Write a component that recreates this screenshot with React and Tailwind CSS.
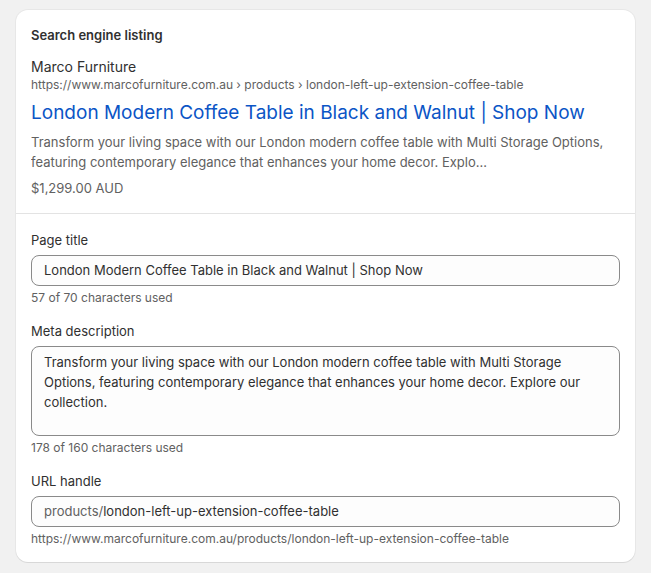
import React from 'react';

const font = { fontFamily: 'Inter, "Noto Sans", sans-serif' };

function Field({ label, help, children }) {
  return (
    <div className="flex flex-col">
      <label className="text-[13px] leading-5 text-[#303030]">{label}</label>
      <div className="mt-[5px]">{children}</div>
      <p className="mt-[2px] text-[12px] leading-5 text-[#616161]">{help}</p>
    </div>
  );
}

export default function App() {
  const title = 'London Modern Coffee Table in Black and Walnut | Shop Now';
  const desc =
    'Transform your living space with our London modern coffee table with Multi Storage Options, featuring contemporary elegance that enhances your home decor. Explore our collection.';

  return (
    <div className="min-h-[573px] bg-[#f1f1f1] px-4 pt-[10px] pb-[11px]" style={font}>
      <div className="rounded-xl bg-white shadow-[0_1px_0_0_rgba(26,26,26,0.07),0_0_0_1px_rgba(0,0,0,0.04)]">
        <div className="px-[15px] pt-[15px] pb-[15px]">
          <h2 className="text-[13px] leading-5 font-semibold text-[#303030]">Search engine listing</h2>
          <div className="mt-[12px]">
            <p className="text-[14px] leading-5 text-[#303030]">Marco Furniture</p>
            <p className="text-[12px] leading-4 text-[#616161]">
              https://www.marcofurniture.com.au › products › london-left-up-extension-coffee-table
            </p>
            <p className="mt-[6px] text-[19px] leading-7 text-[#0b55c6]">{title}</p>
            <p className="mt-[5px] text-[13px] leading-5 text-[#616161] line-clamp-2 pr-4">
              Transform your living space with our London modern coffee table with Multi Storage Options,
              featuring contemporary elegance that enhances your home decor. Explo...
            </p>
            <p className="mt-[6px] text-[13px] leading-5 text-[#616161]">$1,299.00 AUD</p>
          </div>
        </div>
        <div className="border-t border-[#e3e3e3] px-[15px] pt-[16px] pb-[13px] flex flex-col gap-[13px]">
          <Field label="Page title" help="57 of 70 characters used">
            <div className="h-[31px] rounded-lg border border-[#8a8a8a] bg-[#fdfdfd] px-3 flex items-center text-[13px] text-[#303030]">
              {title}
            </div>
          </Field>
          <Field label="Meta description" help="178 of 160 characters used">
            <div className="h-[90px] rounded-lg border border-[#8a8a8a] bg-[#fdfdfd] pl-3 pr-6 pt-[5px] text-[13px] leading-5 text-[#303030]">
              {desc}
            </div>
          </Field>
          <Field label="URL handle" help="https://www.marcofurniture.com.au/products/london-left-up-extension-coffee-table">
            <div className="h-[31px] rounded-lg border border-[#8a8a8a] bg-[#fdfdfd] px-3 flex items-center text-[13px] text-[#303030]">
              <span className="text-[#616161]">products/</span>
              <span>london-left-up-extension-coffee-table</span>
            </div>
          </Field>
        </div>
      </div>
    </div>
  );
}
